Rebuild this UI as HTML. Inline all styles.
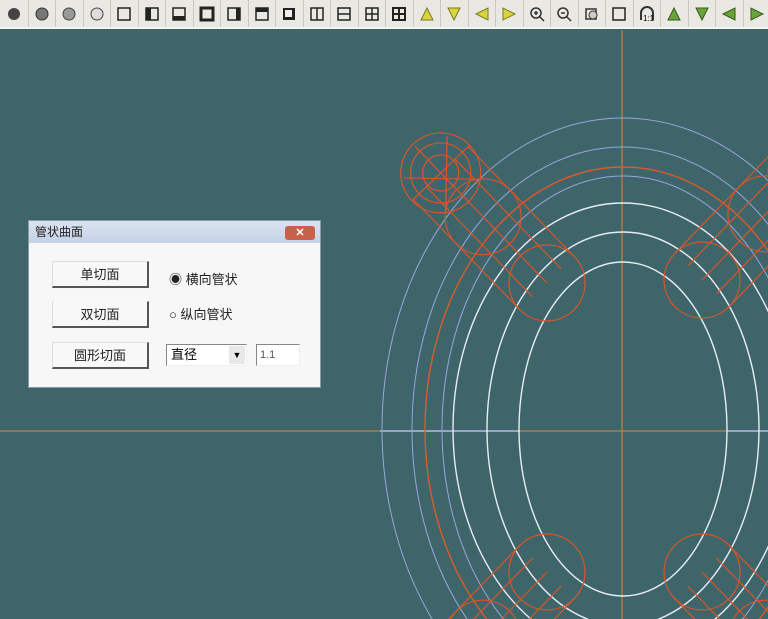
<!DOCTYPE html>
<html style="overflow:hidden"><head><meta charset="utf-8"><style>
html,body{margin:0;width:768px;height:619px;overflow:hidden}
body{background:#3e6569;font-family:"Liberation Sans","Noto Sans CJK SC",sans-serif;position:relative}
#tb{position:absolute;left:0;top:0;width:768px;height:29px;background:#e9e8e2;border-bottom:2px solid #f6f4ee;display:flex;padding-left:1px;box-sizing:border-box;overflow:hidden}
.ic{flex:0 0 27.5px;width:27.5px;height:27px;border-right:1px solid #c9c8c0;box-sizing:border-box;display:flex;align-items:center;justify-content:center}
svg{display:block}
#dlg{position:absolute;left:28px;top:220px;width:293px;height:168px;background:#f7f7f7;border:1px solid #8a9aa8;box-sizing:border-box}
#tt{height:22px;background:linear-gradient(#dbe3f0,#c4d1e6);font-size:12px;line-height:22px;padding-left:6px;color:#222}
#cls{position:absolute;right:5px;top:5px;width:30px;height:14px;background:#c8604a;border-radius:3px;color:#fff;font-size:11px;text-align:center;line-height:14px;font-weight:bold}
.btn{position:absolute;left:23px;width:97px;height:27px;background:#f8f8f8;border:1px solid #ddd;border-right:2px solid #555;border-bottom:2px solid #555;box-sizing:border-box;font-size:13px;text-align:center;line-height:25px;color:#222}
.lab{position:absolute;font-size:13px;color:#222}
</style></head><body>
<div id="tb">
<div class="ic"><svg width="14" height="14"><circle cx="7" cy="7" r="6" fill="#444"/></svg></div>
<div class="ic"><svg width="14" height="14"><circle cx="7" cy="7" r="6" fill="#777" stroke="#333"/></svg></div>
<div class="ic"><svg width="14" height="14"><circle cx="7" cy="7" r="6" fill="#999" stroke="#444"/></svg></div>
<div class="ic"><svg width="14" height="14"><circle cx="7" cy="7" r="6" fill="#ddd" stroke="#444"/></svg></div>
<div class="ic"><svg width="16" height="16"><rect x="2" y="2" width="12" height="12" fill="none" stroke="#222" stroke-width="1.5"/></svg></div>
<div class="ic"><svg width="16" height="16"><rect x="2" y="2" width="12" height="12" fill="none" stroke="#222" stroke-width="1.5"/><rect x="2" y="2" width="5" height="12" fill="#222"/></svg></div>
<div class="ic"><svg width="16" height="16"><rect x="2" y="2" width="12" height="12" fill="none" stroke="#222" stroke-width="1.5"/><rect x="2" y="10" width="12" height="4" fill="#222"/></svg></div>
<div class="ic"><svg width="16" height="16"><rect x="2" y="2" width="12" height="12" fill="none" stroke="#222" stroke-width="3"/></svg></div>
<div class="ic"><svg width="16" height="16"><rect x="2" y="2" width="12" height="12" fill="none" stroke="#222" stroke-width="1.5"/><rect x="10" y="2" width="4" height="12" fill="#222"/></svg></div>
<div class="ic"><svg width="16" height="16"><rect x="2" y="2" width="12" height="12" fill="none" stroke="#222" stroke-width="1.5"/><rect x="2" y="2" width="12" height="4" fill="#222"/></svg></div>
<div class="ic"><svg width="16" height="16"><rect x="2" y="2" width="12" height="12" fill="#222"/><rect x="4" y="4" width="7" height="7" fill="#eee"/></svg></div>
<div class="ic"><svg width="16" height="16"><rect x="2" y="2" width="12" height="12" fill="none" stroke="#222" stroke-width="1.5"/><line x1="8" y1="2" x2="8" y2="14" stroke="#222" stroke-width="1.5"/></svg></div>
<div class="ic"><svg width="16" height="16"><rect x="2" y="2" width="12" height="12" fill="none" stroke="#222" stroke-width="1.5"/><line x1="2" y1="8" x2="14" y2="8" stroke="#222" stroke-width="1.5"/></svg></div>
<div class="ic"><svg width="16" height="16"><rect x="2" y="2" width="12" height="12" fill="none" stroke="#222" stroke-width="1.5"/><path d="M8 2V14M2 8H14" stroke="#222" stroke-width="1.5"/></svg></div>
<div class="ic"><svg width="16" height="16"><rect x="2" y="2" width="12" height="12" fill="none" stroke="#222" stroke-width="2"/><path d="M8 2V14M2 8H14" stroke="#222" stroke-width="2"/></svg></div>
<div class="ic"><svg width="16" height="16"><path d="M8 2L14 14H2Z" fill="#d8d43a" stroke="#7a7a20"/></svg></div>
<div class="ic"><svg width="16" height="16"><path d="M2 2H14L8 14Z" fill="#d8d43a" stroke="#7a7a20"/></svg></div>
<div class="ic"><svg width="16" height="16"><path d="M2 8L14 2V14Z" fill="#d8d43a" stroke="#7a7a20"/></svg></div>
<div class="ic"><svg width="16" height="16"><path d="M14 8L2 2V14Z" fill="#d8d43a" stroke="#7a7a20"/></svg></div>
<div class="ic"><svg width="16" height="16"><circle cx="7" cy="7" r="5" fill="none" stroke="#333" stroke-width="1.5"/><path d="M10.5 10.5L15 15M5 7H9M7 5V9" stroke="#333" stroke-width="1.5"/></svg></div>
<div class="ic"><svg width="16" height="16"><circle cx="7" cy="7" r="5" fill="none" stroke="#333" stroke-width="1.5"/><path d="M10.5 10.5L15 15M5 7H9" stroke="#333" stroke-width="1.5"/></svg></div>
<div class="ic"><svg width="16" height="16"><rect x="2" y="3" width="10" height="10" fill="none" stroke="#333" stroke-width="1.5"/><circle cx="9" cy="9" r="4" fill="#ccc" stroke="#333"/></svg></div>
<div class="ic"><svg width="16" height="16"><rect x="2" y="2" width="12" height="12" fill="none" stroke="#222" stroke-width="1.5"/></svg></div>
<div class="ic"><svg width="16" height="16"><path d="M2 14V7A6 6 0 0 1 14 7V14" fill="none" stroke="#333" stroke-width="2"/><text x="4" y="15" font-size="8" font-family="Liberation Sans">1:1</text></svg></div>
<div class="ic"><svg width="16" height="16"><path d="M8 2L14 14H2Z" fill="#6ba33a" stroke="#375a1a"/></svg></div>
<div class="ic"><svg width="16" height="16"><path d="M2 2H14L8 14Z" fill="#6ba33a" stroke="#375a1a"/></svg></div>
<div class="ic"><svg width="16" height="16"><path d="M2 8L14 2V14Z" fill="#6ba33a" stroke="#375a1a"/></svg></div>
<div class="ic"><svg width="16" height="16"><path d="M14 8L2 2V14Z" fill="#6ba33a" stroke="#375a1a"/></svg></div>
</div>

<svg style="position:absolute;left:0;top:0" width="768" height="619">
<defs>
<g id="tube" fill="none" stroke="#d9552a" stroke-width="1.2">
<circle cx="0" cy="0" r="38"/><circle cx="92" cy="0" r="38"/>
<circle cx="153" cy="0" r="40"/><circle cx="153" cy="0" r="30"/><circle cx="153" cy="0" r="18"/>
<path d="M0 -38H153M0 38H153M0 -20H153M0 20H153M0 0H190M153 -40V40M120 -25L175 30M120 25L175 -30"/>
</g>
</defs>
<line x1="0" y1="431" x2="768" y2="431" stroke="#d9893a" stroke-width="1"/>
<line x1="622" y1="30" x2="622" y2="619" stroke="#d9893a" stroke-width="1"/>
<line x1="380" y1="431" x2="520" y2="431" stroke="#c8d4ee" stroke-width="1.3"/>
<line x1="727" y1="431" x2="768" y2="431" stroke="#c8d4ee" stroke-width="1.3"/>
<g fill="none">
<ellipse cx="623" cy="429" rx="241" ry="311" stroke="#9aa6da" stroke-width="1"/>
<ellipse cx="623" cy="429" rx="211" ry="282" stroke="#9aa6da" stroke-width="1"/>
<ellipse cx="623" cy="429" rx="181" ry="253" stroke="#9aa6da" stroke-width="1"/>
<ellipse cx="623" cy="429" rx="198" ry="262" stroke="#dc5a2c" stroke-width="1.4"/>
<ellipse cx="623" cy="429" rx="170" ry="226" stroke="#e8ecf4" stroke-width="1.4"/>
<ellipse cx="623" cy="429" rx="136" ry="197" stroke="#e8ecf4" stroke-width="1.4"/>
<ellipse cx="623" cy="429" rx="104" ry="167" stroke="#e8ecf4" stroke-width="1.4"/>
</g>
<use href="#tube" transform="translate(547,283) rotate(-134)"/>
<use href="#tube" transform="translate(702,280) rotate(-46)"/>
<use href="#tube" transform="translate(547,572) rotate(134)"/>
<use href="#tube" transform="translate(702,572) rotate(46)"/>
</svg>

<div id="dlg">
<div id="tt">管状曲面</div><div id="cls">✕</div>
<div class="btn" style="top:40px">单切面</div>
<div class="btn" style="top:80px;border-top-color:#f8f8f8">双切面</div>
<div class="btn" style="top:121px">圆形切面</div>
<div class="lab" style="left:140px;top:48px">◉&nbsp;横向管状</div>
<div class="lab" style="left:140px;top:83px">○&nbsp;纵向管状</div>
<div style="position:absolute;left:137px;top:123px;width:81px;height:22px;border:1px solid #888;border-right-color:#eee;border-bottom-color:#eee;background:#fff;box-sizing:border-box;font-size:13px;line-height:20px;padding-left:4px">直径<span style="position:absolute;right:1px;top:1px;width:16px;height:18px;background:#e8e8e8;font-size:9px;text-align:center;line-height:18px">▼</span></div>
<div style="position:absolute;left:227px;top:123px;width:44px;height:22px;border:1px solid #888;border-right-color:#eee;border-bottom-color:#eee;background:#fff;box-sizing:border-box;font-size:11px;line-height:20px;padding-left:3px;color:#555">1.1</div>
</div>
</body></html>
